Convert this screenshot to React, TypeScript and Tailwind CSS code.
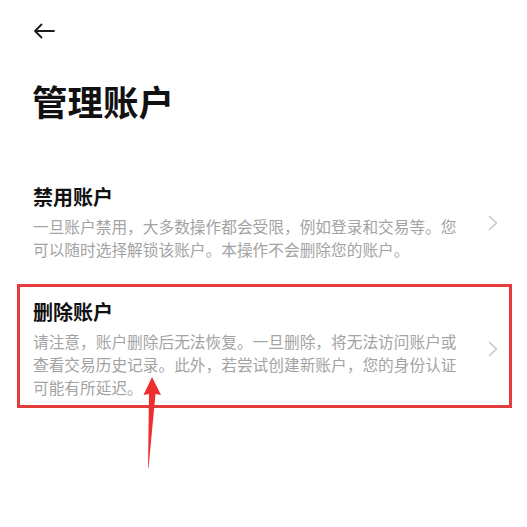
import React from "react";

const font = { fontFamily: '"Noto Sans CJK SC", "Noto Sans", sans-serif' };

function Chevron() {
  return (
    <svg width="10" height="16" viewBox="0 0 10 16" className="shrink-0">
      <path d="M1.5 1.5 L8.5 8 L1.5 14.5" fill="none" stroke="#c6c6c6" strokeWidth="1.6" strokeLinecap="round" strokeLinejoin="round" />
    </svg>
  );
}

function Section({ title, desc, boxed }: { title: string; desc: string; boxed?: boolean }) {
  return (
    <div className="relative flex items-center justify-between pl-[33px] pr-[29px]">
      <div className="w-[432px]">
        <div className="text-[20px] leading-[26px] font-bold text-[#111111]">{title}</div>
        <div className="mt-[5px] text-[15.7px] leading-[23px] text-[#a3a3a3]">{desc}</div>
      </div>
      <Chevron />
      {boxed && (
        <div className="absolute left-[17px] right-[15px] top-[-15px] bottom-[-9px] border-[3px] border-[#e23c3c] pointer-events-none" />
      )}
    </div>
  );
}

export default function App() {
  return (
    <div className="relative w-[527px] h-[527px] bg-white overflow-hidden" style={font}>
      <div className="h-[62px] flex items-center pl-[33px]">
        <svg width="22" height="16" viewBox="0 0 22 16">
          <path d="M21 8 H2 M8.5 1.5 L2 8 L8.5 14.5" fill="none" stroke="#1a1a1a" strokeWidth="1.8" strokeLinecap="round" strokeLinejoin="round" />
        </svg>
      </div>
      <div className="mt-[17px] pl-[32px] text-[35.5px] leading-[43px] font-bold text-[#111111]">管理账户</div>
      <div className="mt-[62px]">
        <Section
          title="禁用账户"
          desc="一旦账户禁用，大多数操作都会受限，例如登录和交易等。您可以随时选择解锁该账户。本操作不会删除您的账户。"
        />
      </div>
      <div className="mt-[38px]">
        <Section
          boxed
          title="删除账户"
          desc="请注意，账户删除后无法恢复。一旦删除，将无法访问账户或查看交易历史记录。此外，若尝试创建新账户，您的身份认证可能有所延迟。"
        />
      </div>
      <svg className="absolute left-0 top-0 pointer-events-none" width="527" height="527" viewBox="0 0 527 527">
        <polygon points="152,377 161,395 155.5,394 148.5,468 148,468 149,394 143.5,395" fill="#ee2f2f" />
      </svg>
    </div>
  );
}
